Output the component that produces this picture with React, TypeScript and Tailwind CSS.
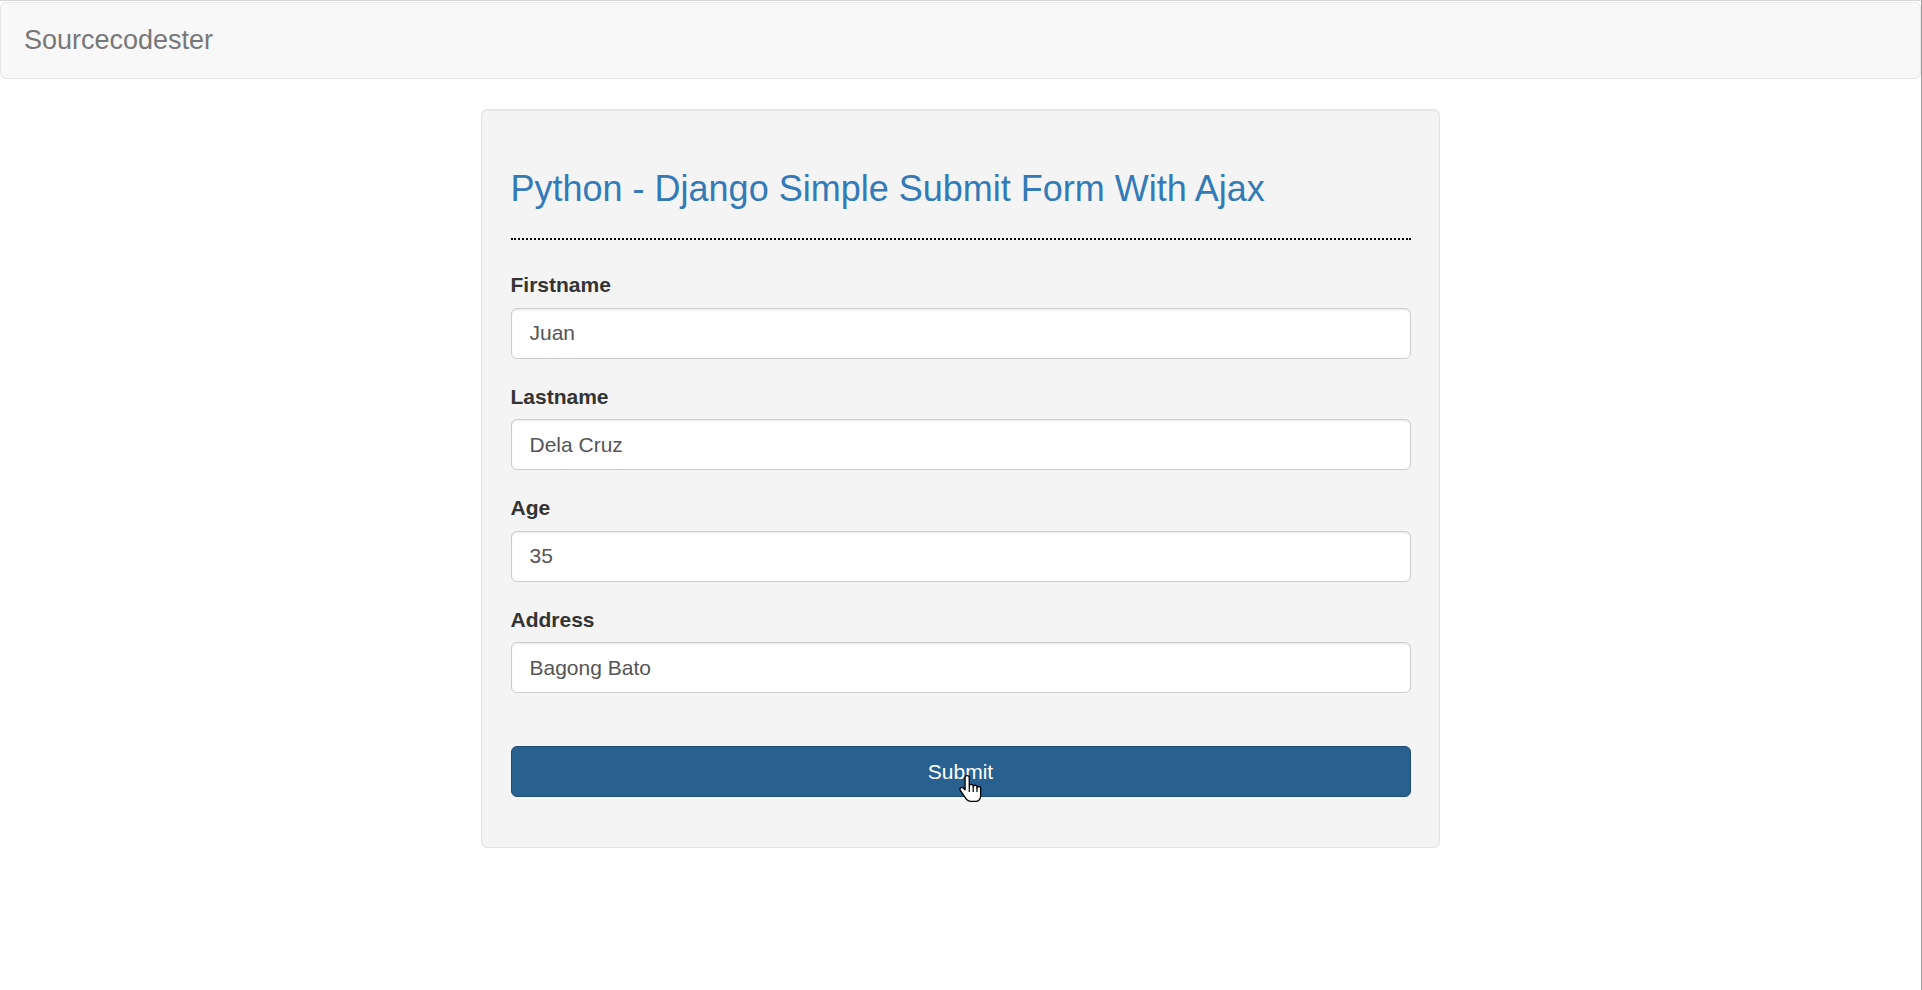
import React from "react";

const fields = [
  { label: "Firstname", value: "Juan" },
  { label: "Lastname", value: "Dela Cruz" },
  { label: "Age", value: "35" },
  { label: "Address", value: "Bagong Bato" },
];

const HandCursor = () => (
  <svg
    className="absolute left-[448px] top-[28px] pointer-events-none"
    width="23"
    height="29"
    viewBox="0 0 17 21"
  >
    <path
      d="M6 1C5.1 1 4.5 1.7 4.5 2.5V11.5L3.2 10.1C2.6 9.5 1.7 9.5 1.1 10.1C.6 10.6.6 11.3 1 11.9L4.6 17.3C5.6 18.9 6.6 20 9 20H12C14.5 20 16 18.3 16 15.6V10.4C16 9.6 15.4 9 14.6 9C13.9 9 13.3 9.5 13.3 10.2V9.5C13.3 8.7 12.7 8.1 11.9 8.1C11.1 8.1 10.5 8.7 10.5 9.5V8.8C10.5 8 9.9 7.4 9.1 7.4C8.3 7.4 7.6 8 7.6 8.8V2.5C7.6 1.7 7 1 6 1Z"
      fill="#fff"
      stroke="#000"
      strokeWidth="1"
      strokeLinejoin="round"
    />
    <path d="M7.6 8.8V13M10.5 9.5V13M13.3 10.2V13" stroke="#000" strokeWidth="0.9" />
  </svg>
);

const App = () => {
  return (
    <div
      className="min-h-screen bg-white border-t border-t-[#d6d6d6] border-r border-r-[#9a9a9a]"
      style={{ fontFamily: '"Liberation Sans", Arial, Helvetica, sans-serif' }}
    >
      <nav className="mt-[1px] h-[77px] flex items-center bg-[#f8f8f8] border border-[#e7e7e7] rounded-[6px] pl-[23px] mb-[30px]">
        <span className="text-[27px] text-[#777777]">Sourcecodester</span>
      </nav>

      <div className="mx-auto w-[959px] bg-[#f4f4f4] border border-[#e3e3e3] rounded-[6px] shadow-[inset_0_1px_1px_rgba(0,0,0,0.05)] px-[28.5px] pt-[28.5px] pb-[50px]">
        <h3 className="mt-[30px] text-[36px] leading-[1.1] text-[#337ab7] font-normal">
          Python - Django Simple Submit Form With Ajax
        </h3>
        <hr className="mt-[30px] mb-[30px] h-0 border-0 border-t-2 border-dotted border-t-black" />

        <form onSubmit={(e) => e.preventDefault()}>
          {fields.map((f, i) => (
            <div key={f.label} className={i === fields.length - 1 ? "mb-[53px]" : "mb-[23px]"}>
              <label className="block text-[21px] leading-[30px] font-bold text-[#333333] mb-[7.5px]">
                {f.label}
              </label>
              <input
                type="text"
                readOnly
                value={f.value}
                className="block w-full h-[51px] px-[18px] text-[21px] text-[#555555] bg-white border-[1.5px] border-[#cccccc] rounded-[6px] shadow-[inset_0_1.5px_1.5px_rgba(0,0,0,0.075)] outline-none"
              />
            </div>
          ))}

          <div className="relative">
            <button
              type="submit"
              className="block w-full h-[51px] text-[21px] text-white bg-[#286090] border-[1.5px] border-[#204d74] rounded-[6px]"
            >
              Submit
            </button>
            <HandCursor />
          </div>
        </form>
      </div>
    </div>
  );
};

export default App;
